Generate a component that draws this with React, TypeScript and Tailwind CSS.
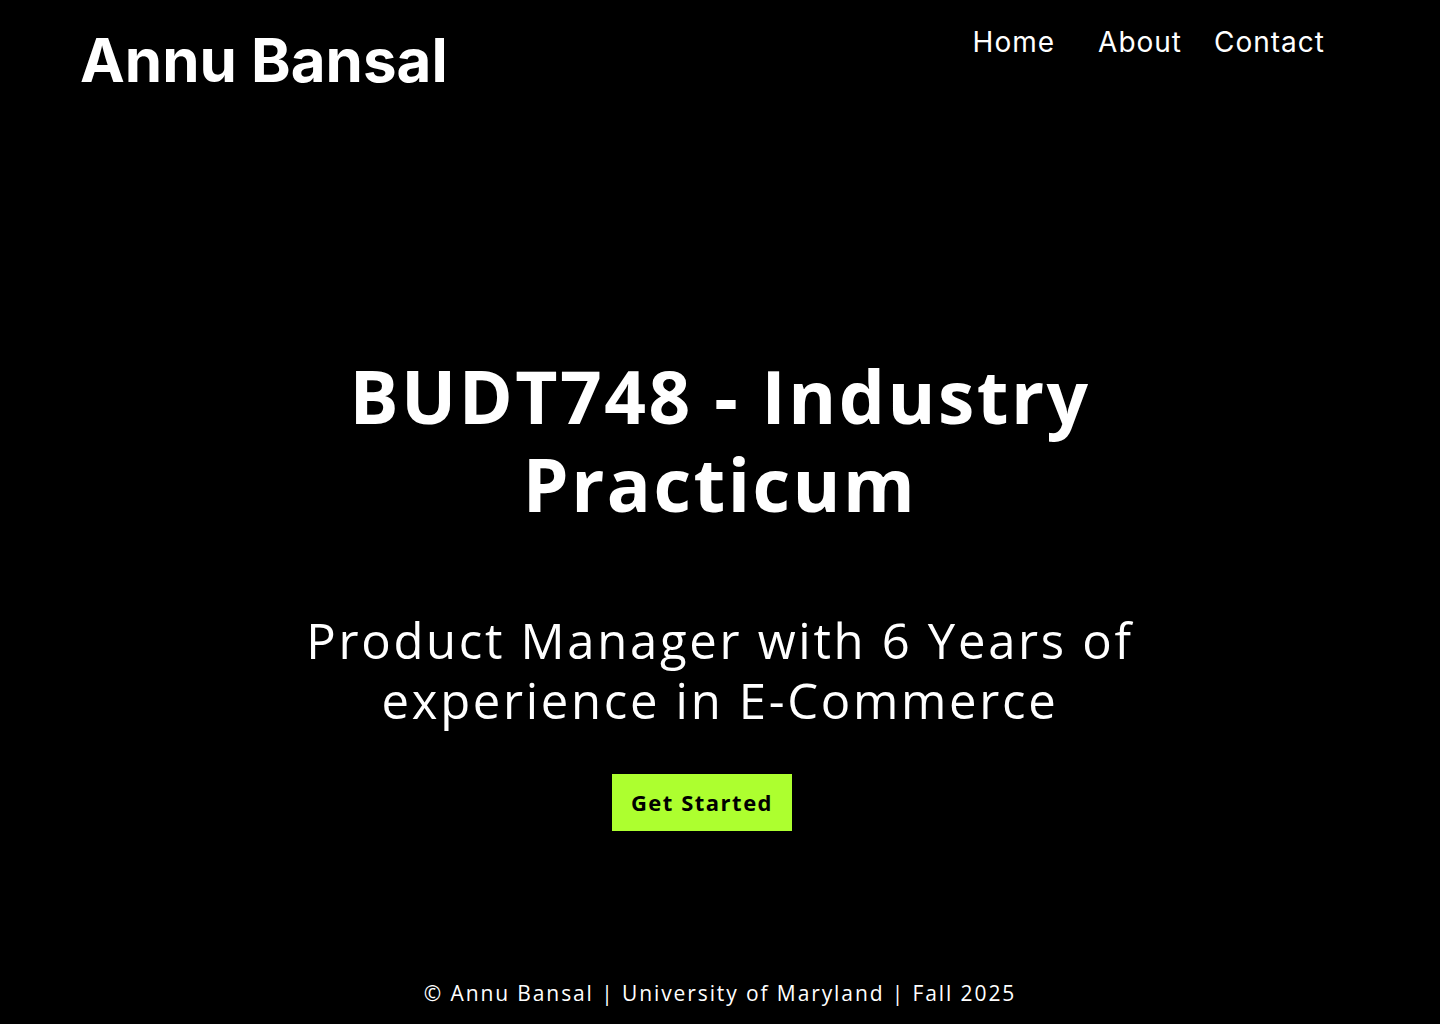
import React from "react";

export default function App() {
  return (
    <div className="min-h-[1024px] h-[1024px] w-full bg-black text-white flex flex-col overflow-hidden">
      <header className="flex items-start justify-between pl-[80px] pr-[116px] pt-[22px]">
        <div className="font-['Inter',sans-serif] font-bold text-[60px] leading-[76px]">
          Annu Bansal
        </div>
        <nav className="flex items-center pt-[2px] font-['Inter',sans-serif] text-[28px] leading-[36px] tracking-[1px]">
          <a className="mr-[43px]">Home</a>
          <a className="mr-[32px]">About</a>
          <a className="-mr-[1px]">Contact</a>
        </nav>
      </header>
      <main className="flex flex-col items-center text-center font-['Open_Sans',sans-serif] pt-[254px]">
        <h1 className="font-bold text-[73px] leading-[88px] tracking-[2.5px] w-[800px]">
          BUDT748 - Industry Practicum
        </h1>
        <p className="mt-[82px] text-[49px] leading-[60px] tracking-[2.7px] w-[900px]">
          Product Manager with 6 Years of experience in E-Commerce
        </p>
        <button className="mt-[44px] -translate-x-[18px] bg-[#adff2f] text-black font-bold text-[22px] tracking-[1.5px] w-[180px] h-[57px]">
          Get Started
        </button>
      </main>
      <footer className="mt-auto pb-[17px] text-center font-['Open_Sans',sans-serif] text-[21px] leading-[28px] tracking-[1.9px]">
        © Annu Bansal | University of Maryland | Fall 2025
      </footer>
    </div>
  );
}
